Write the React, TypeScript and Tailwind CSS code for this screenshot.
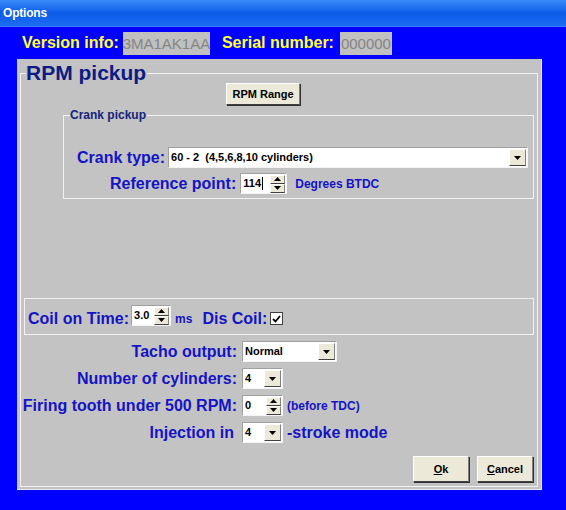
import React from 'react';

const lbl = 'text-[16px] font-bold leading-none text-[#1414c4] whitespace-nowrap';
const raised =
  'bg-[#ece9d8] border border-t-white border-l-white border-r-[#808080] border-b-[#404040]';

function DownArrow() {
  return (
    <svg width="7" height="4" viewBox="0 0 7 4">
      <path d="M0 0h7L3.5 4z" fill="#000" />
    </svg>
  );
}

function UpArrow() {
  return (
    <svg width="7" height="4" viewBox="0 0 7 4">
      <path d="M0 4h7L3.5 0z" fill="#000" />
    </svg>
  );
}

function Combo({ value, className }: { value: string; className: string }) {
  return (
    <div
      className={`h-[21px] bg-white border border-t-[#a0a0a0] border-l-[#a0a0a0] border-r-[#f4f4f4] border-b-[#f4f4f4] flex items-center pl-[2px] pr-[1px] ${className}`}
    >
      <span className="flex-1 text-[11px] font-bold text-black whitespace-pre leading-none">{value}</span>
      <div className={`w-[17px] h-[17px] flex items-center justify-center ${raised}`}>
        <DownArrow />
      </div>
    </div>
  );
}

function Spin({ value, className, cursor }: { value: string; className: string; cursor?: boolean }) {
  return (
    <div
      className={`h-[21px] bg-white border border-t-[#a0a0a0] border-l-[#a0a0a0] border-r-[#f4f4f4] border-b-[#f4f4f4] flex items-center pl-[2px] pr-[1px] ${className}`}
    >
      <span className="flex-1 text-[11px] font-bold text-black leading-none flex items-center">
        {value}
        {cursor && <span className="inline-block w-px h-[13px] bg-black ml-px" />}
      </span>
      <div className="flex flex-col w-[15px]">
        <div className={`h-[9px] flex items-center justify-center ${raised}`}>
          <UpArrow />
        </div>
        <div className={`h-[9px] flex items-center justify-center ${raised}`}>
          <DownArrow />
        </div>
      </div>
    </div>
  );
}

function Button({ children, className }: { children: React.ReactNode; className: string }) {
  return (
    <div
      className={`flex items-center justify-center text-[11px] font-bold text-black bg-[#ece9d8] border border-t-white border-l-white border-r-[#808080] border-b-[#404040] shadow-[1px_1px_0_#303030] ${className}`}
    >
      {children}
    </div>
  );
}

export default function App() {
  return (
    <div
      className="w-[566px] h-[510px] bg-[#0000ff] overflow-hidden"
      style={{ fontFamily: '"Liberation Sans", Arial, sans-serif' }}
    >
      {/* title bar */}
      <div className="h-[27px] bg-gradient-to-b from-[#3a8cf8] via-[#0b5be8] to-[#1c6cf2] flex items-center pl-[3px] border-b border-[#3b82f6]">
        <span className="text-white text-[12px] font-bold tracking-[-0.2px]">Options</span>
      </div>

      {/* version row */}
      <div className="h-[32px] flex items-center pl-[22px]">
        <span className="text-[16px] font-bold text-[#ffff33] leading-none">Version info:</span>
        <div className="ml-[4px] w-[87px] h-[23px] bg-[#c0c0c0] flex items-center justify-center text-[15px] text-[#858585] leading-none">
          3MA1AK1AA
        </div>
        <span className="ml-[12px] text-[16px] font-bold text-[#ffff33] leading-none">Serial number:</span>
        <div className="ml-[6px] w-[52px] h-[23px] bg-[#c0c0c0] flex items-center justify-center text-[15px] text-[#858585] leading-none">
          000000
        </div>
      </div>

      {/* panel */}
      <div className="ml-[17px] w-[525px] h-[431px] bg-[#c3c3c3] pt-[14px] pl-[3px] border-r border-b border-[#e8e8e8]">
        <div className="relative w-[518px] h-[414px] border border-[#f2f2f2]">
          <span className="absolute left-[5px] top-[-13px] bg-[#c3c3c3] pr-[1px] text-[21px] font-bold leading-[23px] text-[#0c1c84]">
            RPM pickup
          </span>

          <Button className="ml-[205px] mt-[9px] w-[74px] h-[22px]">RPM Range</Button>

          {/* crank pickup */}
          <div className="relative ml-[42px] mt-[10px] w-[471px] h-[84px] border border-[#f2f2f2]">
            <span className="absolute left-[6px] top-[-9px] bg-[#c3c3c3] pr-[1px] text-[12px] font-bold leading-[16px] text-[#14247c]">
              Crank pickup
            </span>
            <div className="mt-[31px] flex items-center pl-[13px]">
              <span className={lbl}>Crank type:</span>
              <Combo value="60 - 2  (4,5,6,8,10 cylinders)" className="ml-[3px] w-[360px]" />
            </div>
            <div className="mt-[5px] flex items-center pl-[46px]">
              <span className={lbl}>Reference point:</span>
              <Spin value="114" cursor className="ml-[4px] w-[47px]" />
              <span className="ml-[8px] text-[12px] font-bold text-[#1414c4] leading-none">Degrees BTDC</span>
            </div>
          </div>

          {/* coil */}
          <div className="ml-[3px] mt-[99px] w-[510px] h-[37px] border border-[#f2f2f2] flex items-center pl-[3px] pt-[4px]">
            <span className={lbl}>Coil on Time:</span>
            <Spin value="3.0" className="ml-[2px] w-[40px] -mt-[6px]" />
            <span className="ml-[4px] text-[12px] font-bold text-[#1414c4] leading-none">ms</span>
            <span className={`${lbl} ml-[10px]`}>Dis Coil:</span>
            <div className="ml-[3px] w-[13px] h-[13px] bg-white border border-[#404040] flex items-center justify-center">
              <svg width="9" height="8" viewBox="0 0 9 8">
                <path d="M1 4l2.5 2.5L8 1" stroke="#000" strokeWidth="1.8" fill="none" />
              </svg>
            </div>
          </div>

          {/* settings rows */}
          <div className="mt-[6px] flex flex-col gap-[6px]">
            <div className="flex items-center">
              <span className={`${lbl} w-[216px] text-right`}>Tacho output:</span>
              <Combo value="Normal" className="ml-[5px] w-[95px]" />
            </div>
            <div className="flex items-center">
              <span className={`${lbl} w-[216px] text-right`}>Number of cylinders:</span>
              <Combo value="4" className="ml-[5px] w-[41px]" />
            </div>
            <div className="flex items-center">
              <span className={`${lbl} w-[216px] text-right`}>Firing tooth under 500 RPM:</span>
              <Spin value="0" className="ml-[5px] w-[41px]" />
              <span className="ml-[4px] text-[12px] font-bold text-[#1414c4] leading-none">(before TDC)</span>
            </div>
            <div className="flex items-center">
              <span className={`${lbl} w-[213px] text-right`}>Injection in</span>
              <Combo value="4" className="ml-[8px] w-[41px]" />
              <span className={`${lbl} ml-[4px]`}>-stroke mode</span>
            </div>
          </div>

          {/* buttons */}
          <div className="mt-[13px] flex justify-end gap-[8px] pr-[4px]">
            <Button className="w-[56px] h-[26px]">
              <span className="underline">O</span>k
            </Button>
            <Button className="w-[56px] h-[26px]">
              <span className="underline">C</span>ancel
            </Button>
          </div>
        </div>
      </div>
    </div>
  );
}
